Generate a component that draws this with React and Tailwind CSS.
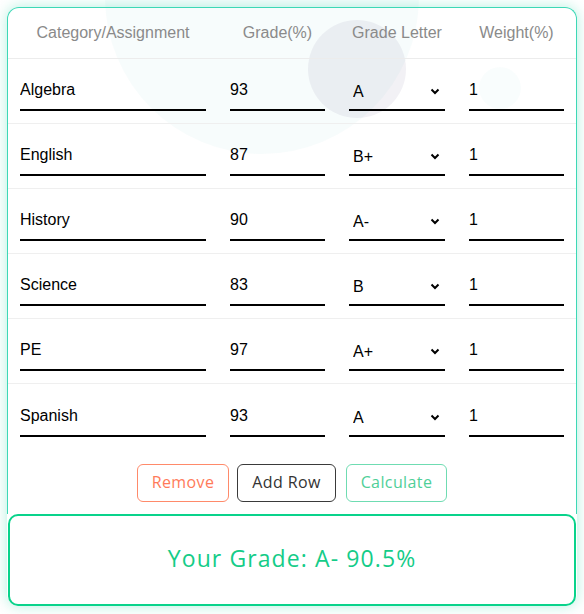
import { useState } from "react";

const gradeLetters = ["A+", "A", "A-", "B+", "B", "B-", "C+", "C", "C-", "D+", "D", "D-", "F"];

const initialRows = [
  { name: "Algebra", grade: "93", letter: "A", weight: "1" },
  { name: "English", grade: "87", letter: "B+", weight: "1" },
  { name: "History", grade: "90", letter: "A-", weight: "1" },
  { name: "Science", grade: "83", letter: "B", weight: "1" },
  { name: "PE", grade: "97", letter: "A+", weight: "1" },
  { name: "Spanish", grade: "93", letter: "A", weight: "1" },
];

const cols = "grid grid-cols-[210px_119px_120px_119px]";

const App = () => {
  const [rows, setRows] = useState(initialRows);

  const update = (i, key, value) => {
    setRows(rows.map((r, idx) => (idx === i ? { ...r, [key]: value } : r)));
  };

  return (
    <div className="min-h-screen bg-white px-[7px] pt-[7px] pb-[9px] font-['Liberation_Sans',Arial,sans-serif]">
      <div className="relative rounded-xl shadow-[0_0_14px_rgba(0,205,150,0.3)]">
        {/* decorative circles */}
        <div className="pointer-events-none absolute left-[98px] top-[-167px] h-[314px] w-[314px] rounded-full bg-[rgba(0,170,150,0.03)]" />
        <div className="pointer-events-none absolute left-[301px] top-[13px] h-[98px] w-[98px] rounded-full bg-[rgba(60,40,110,0.065)]" />
        <div className="pointer-events-none absolute left-[472px] top-[60px] h-[42px] w-[42px] rounded-full bg-[rgba(0,170,150,0.025)]" />

        {/* ── Table ── */}
        <div className="relative rounded-t-xl border-x border-t border-[#3dd8b6]">
          <div className={`${cols} h-[51px] border-b border-[#ececec] text-[16px] text-[#8a8a8a]`}>
            <div className="flex items-center justify-center">Category/Assignment</div>
            <div className="flex items-center justify-center">Grade(%)</div>
            <div className="flex items-center justify-center">Grade Letter</div>
            <div className="flex items-center justify-center">Weight(%)</div>
          </div>

          {rows.map((row, i) => (
            <div
              key={i}
              className={`${cols} h-[65px] items-center ${i < rows.length - 1 ? "border-b border-[#efefef]" : ""}`}
            >
              <div className="px-3">
                <input
                  value={row.name}
                  onChange={(e) => update(i, "name", e.target.value)}
                  className="h-10 w-full border-b-2 border-black bg-transparent text-[16px] text-black outline-none"
                />
              </div>
              <div className="px-3">
                <input
                  value={row.grade}
                  onChange={(e) => update(i, "grade", e.target.value)}
                  className="h-10 w-full border-b-2 border-black bg-transparent text-[16px] text-black outline-none"
                />
              </div>
              <div className="relative px-3">
                <select
                  value={row.letter}
                  onChange={(e) => update(i, "letter", e.target.value)}
                  className="h-10 w-full appearance-none border-b-2 border-black bg-transparent pl-1 pt-1 text-[16px] text-black outline-none"
                >
                  {gradeLetters.map((g) => (
                    <option key={g} value={g}>{g}</option>
                  ))}
                </select>
                <svg
                  className="pointer-events-none absolute right-[17px] top-[17px]"
                  width="10"
                  height="7"
                  viewBox="0 0 10 7"
                  fill="none"
                  stroke="black"
                  strokeWidth="2"
                >
                  <path d="M1.5 1.5l3.5 3.5 3.5-3.5" />
                </svg>
              </div>
              <div className="px-3">
                <input
                  value={row.weight}
                  onChange={(e) => update(i, "weight", e.target.value)}
                  className="h-10 w-full border-b-2 border-black bg-transparent text-[16px] text-black outline-none"
                />
              </div>
            </div>
          ))}

          {/* ── Buttons ── */}
          <div className="flex justify-center gap-2 pt-[15px] pb-3 font-['Open_Sans',sans-serif] text-[16px] tracking-[0.4px]">
            <button className="h-[38px] w-[92px] rounded-md border border-[#ff8a6a] pb-0.5 text-[#ff7b5a]">
              Remove
            </button>
            <button className="h-[38px] w-[99px] rounded-md border border-[#3a3a3a] pb-0.5 text-[#333]">
              Add Row
            </button>
            <button className="ml-0.5 h-[38px] w-[101px] rounded-md border border-[#6fdcb2] pb-0.5 text-[#4fcf98]">
              Calculate
            </button>
          </div>
        </div>

        {/* ── Result ── */}
        <div className="relative mx-px flex h-[92px] items-center justify-center rounded-[10px] border-2 border-[#09d38b] bg-white pb-1 font-['Open_Sans',sans-serif] text-[23px] tracking-[1.1px] text-[#14cc88]">
          Your Grade: A- 90.5%
        </div>
      </div>
    </div>
  );
};

export default App;
